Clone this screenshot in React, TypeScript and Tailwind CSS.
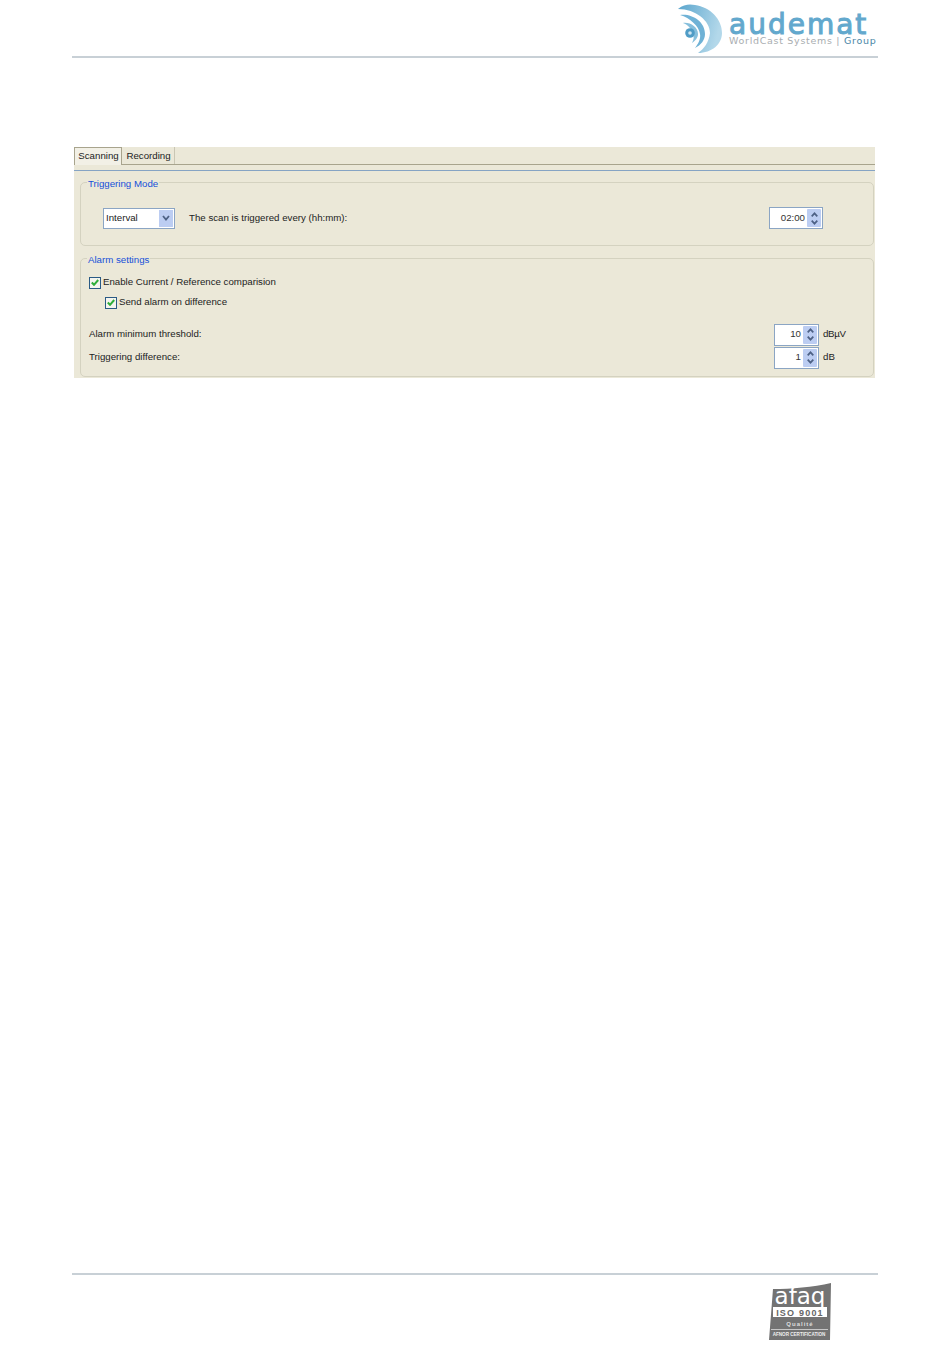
function Spin({ w, value }: { w: string; value: string }) {
  return (
    <div className={`${w} h-[22px] shrink-0 flex items-stretch bg-white border border-[#8ba5c4] p-px`}>
      <div className="flex-1 flex items-center justify-end pr-[2px] text-[#333]">{value}</div>
      <div className="w-[14px] bg-[#bccdf2] rounded-[1px] flex flex-col items-center justify-center gap-[3px]">
        <svg width="7" height="5" viewBox="0 0 7 5"><path d="M0.7 4.3 L3.5 1.3 L6.3 4.3" fill="none" stroke="#4d6185" strokeWidth="1.7" /></svg>
        <svg width="7" height="5" viewBox="0 0 7 5"><path d="M0.7 0.7 L3.5 3.7 L6.3 0.7" fill="none" stroke="#4d6185" strokeWidth="1.7" /></svg>
      </div>
    </div>
  );
}

function Check({ label }: { label: string }) {
  return (
    <div className="flex items-center gap-[2px] h-[13px]">
      <div className="w-[12px] h-[12px] bg-[#f4f4ee] border border-[#2a5a85] flex items-center justify-center">
        <svg width="8" height="7" viewBox="0 0 8 7"><path d="M0.8 3.5 L3 5.8 L7.2 1" fill="none" stroke="#2fae3a" strokeWidth="2" /></svg>
      </div>
      <span>{label}</span>
    </div>
  );
}

function AudematLogo() {
  return (
    <svg width="48" height="52" viewBox="0 0 48 52" className="shrink-0">
      <defs>
        <linearGradient id="g" x1="0" y1="0" x2="1" y2="0.3">
          <stop offset="0" stopColor="#5aa5cd" />
          <stop offset="1" stopColor="#b3d8ea" />
        </linearGradient>
      </defs>
      <path d="M2 6 C8 1 14 1 19 2 C34 4 46 16 46 30 C46 41 36 50 22 50 C28 46 33 39 34 30 C34 18 20 6 2 6 Z" fill="url(#g)" />
      <path d="M4 12 C15 10 29 18 29 31 C29 37 25 42 19 45 C22 41 25 36 24 31 C23 23 14 15 4 12 Z" fill="#6fb2d6" />
      <path d="M7 20 C14 19 22 24 22 31 C22 35 19 38 16 40 C18 36 18 34 17 31 C16 26 12 22 7 20 Z" fill="#86bfdc" />
      <circle cx="14" cy="30" r="4.8" fill="#4f9cc6" />
      <circle cx="14" cy="30" r="1.8" fill="#cfe6f2" />
    </svg>
  );
}

function AfaqLogo() {
  return (
    <svg width="62" height="58" viewBox="0 0 62 58">
      <path d="M4 6 C22 6 44 4 62 0 L61 57 L0 57 Z" fill="#737373" />
      <text x="31" y="21" textAnchor="middle" fontFamily="'DejaVu Sans', sans-serif" fontSize="23" fill="#fff">afaq</text>
      <rect x="4" y="24" width="54" height="10" fill="#fff" />
      <text x="31" y="32.5" textAnchor="middle" fontFamily="'Liberation Sans', sans-serif" fontSize="9" fontWeight="700" letterSpacing="1.2" fill="#666">ISO 9001</text>
      <text x="31" y="43" textAnchor="middle" fontFamily="'Liberation Sans', sans-serif" fontSize="6" fontWeight="700" letterSpacing="1" fill="#ddd">Qualité</text>
      <rect x="2" y="46" width="57" height="0.8" fill="#ddd" />
      <text x="30" y="53" textAnchor="middle" fontFamily="'Liberation Sans', sans-serif" fontSize="4.6" fontWeight="700" fill="#eee">AFNOR CERTIFICATION</text>
    </svg>
  );
}

function Group({ title, className, children }: { title: string; className: string; children: React.ReactNode }) {
  return (
    <div className={`relative ml-[6px] mr-[1px] border border-[#d4d2c0] rounded-[5px] ${className}`}>
      <span className="absolute left-[6px] top-[-5px] leading-[12px] text-[#1650d8] bg-[#ebe8d8] px-px">{title}</span>
      {children}
    </div>
  );
}

export default function App() {
  return (
    <div className="w-[950px] h-[1359px] bg-white flex flex-col font-['Liberation_Sans',sans-serif] text-[9.7px] text-[#222]">
      <header className="mx-[72px] w-[806px] h-[58px] border-b-2 border-[#c8d0d6] flex justify-end items-start pt-[3px]">
        <div className="flex gap-[5px]">
          <AudematLogo />
          <div className="flex flex-col w-[149px]">
            <span className="font-['DejaVu_Sans',sans-serif] text-[28px] leading-[22px] text-[#62a8cd] mt-[11px] tracking-[2px] [-webkit-text-stroke:1px_#62a8cd]">audemat</span>
            <span className="font-['DejaVu_Sans',sans-serif] text-[9.5px] leading-[11px] -mt-px text-[#a9adb0] whitespace-nowrap tracking-[0.7px]">
              WorldCast Systems | <span className="text-[#4a86a6]">Group</span>
            </span>
          </div>
        </div>
      </header>

      <main className="ml-[74px] mt-[89px] w-[801px] h-[231px] bg-[#ebe8d8] flex flex-col">
        <div className="h-[18px] flex items-stretch border-b border-[#a8a48d]">
          <div className="w-[48px] h-[18px] bg-[#f2f0e6] border border-[#a8a48d] border-b-0 flex items-center justify-center pl-px">Scanning</div>
          <div className="w-[53px] flex items-center justify-center border-r border-[#c9c6b4] pt-px pl-px">Recording</div>
        </div>
        <div className="mt-[5px] h-px bg-[#86a4c4]" />

        <Group title="Triggering Mode" className="mt-[11px] h-[64px] flex items-center pl-[22px] pr-[50px] pt-[8px]">
          <div className="w-[72px] h-[21px] bg-white border border-[#8ba5c4] flex items-stretch p-px">
            <div className="flex-1 flex items-center pl-px">Interval</div>
            <div className="w-[14px] bg-[#bccdf2] flex items-center justify-center">
              <svg width="8" height="6" viewBox="0 0 8 6"><path d="M1 1 L4 4.5 L7 1" fill="none" stroke="#4d6185" strokeWidth="1.8" /></svg>
            </div>
          </div>
          <span className="ml-[14px]">The scan is triggered every (hh:mm):</span>
          <div className="ml-auto">
            <Spin w="w-[54px]" value="02:00" />
          </div>
        </Group>

        <Group title="Alarm settings" className="mt-[12px] h-[119px] pl-[8px] pr-[28px] flex flex-col">
          <div className="mt-[17px]"><Check label="Enable Current / Reference comparision" /></div>
          <div className="mt-[7px] ml-[16px]"><Check label="Send alarm on difference" /></div>
          <div className="mt-[14px] flex items-center h-[23px]">
            <span>Alarm minimum threshold:</span>
            <div className="ml-auto flex items-center gap-[4px] w-[71px]">
              <Spin w="w-[45px]" value="10" />
              <span className="tracking-[-0.3px]">dBµV</span>
            </div>
          </div>
          <div className="flex items-center h-[23px]">
            <span>Triggering difference:</span>
            <div className="ml-auto flex items-center gap-[4px] w-[71px]">
              <Spin w="w-[45px]" value="1" />
              <span>dB</span>
            </div>
          </div>
        </Group>
      </main>

      <footer className="mx-[72px] w-[806px] mt-[895px] border-t-2 border-[#c8d0d6] flex justify-end pt-[8px] pr-[47px]">
        <AfaqLogo />
      </footer>
    </div>
  );
}
